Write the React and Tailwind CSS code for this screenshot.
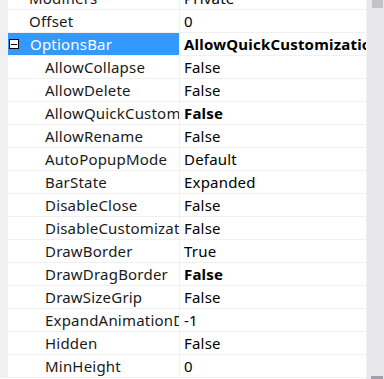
const rows = [
  { name: 'Modifiers', value: 'Private', level: 0 },
  { name: 'Offset', value: '0', level: 0 },
  { name: 'OptionsBar', value: 'AllowQuickCustomization', level: 0, group: true, bold: true },
  { name: 'AllowCollapse', value: 'False', level: 1 },
  { name: 'AllowDelete', value: 'False', level: 1 },
  { name: 'AllowQuickCustomization', value: 'False', level: 1, bold: true },
  { name: 'AllowRename', value: 'False', level: 1 },
  { name: 'AutoPopupMode', value: 'Default', level: 1 },
  { name: 'BarState', value: 'Expanded', level: 1 },
  { name: 'DisableClose', value: 'False', level: 1 },
  { name: 'DisableCustomization', value: 'False', level: 1 },
  { name: 'DrawBorder', value: 'True', level: 1 },
  { name: 'DrawDragBorder', value: 'False', level: 1, bold: true },
  { name: 'DrawSizeGrip', value: 'False', level: 1 },
  { name: 'ExpandAnimationDelay', value: '-1', level: 1 },
  { name: 'Hidden', value: 'False', level: 1 },
  { name: 'MinHeight', value: '0', level: 1 },
];

function Row({ row }) {
  const selected = row.group;
  return (
    <div className="flex h-[23px] border-b border-[#f0f0f0]">
      <div className="w-[8px] shrink-0 bg-[#f0f0f0]" />
      <div
        className={`flex w-[172px] shrink-0 items-center overflow-hidden whitespace-nowrap border-r border-[#f0f0f0] ${
          selected ? 'bg-[#3399ff] text-white' : 'text-[#1a1a1a]'
        }`}
      >
        {row.group ? (
          <>
            <span className="ml-[1px] flex h-[10px] w-[10px] shrink-0 items-center justify-center border border-black bg-white">
              <span className="h-[1px] w-[6px] bg-black" />
            </span>
            <span className="pl-[11px]">{row.name}</span>
          </>
        ) : (
          <span className={row.level ? 'pl-[37px]' : 'pl-[21px]'}>{row.name}</span>
        )}
      </div>
      <div
        className={`flex min-w-0 flex-1 items-center overflow-hidden whitespace-nowrap pl-[4px] text-black ${
          row.bold ? 'font-bold' : ''
        }`}
      >
        {row.value}
      </div>
    </div>
  );
}

export default function App() {
  return (
    <div
      className="flex h-[379px] w-[384px] overflow-hidden bg-white text-[15px] leading-none tracking-[0.2px]"
      style={{ fontFamily: '"Noto Sans", "Noto Sans CJK SC", sans-serif' }}
    >
      <div className="h-full w-[367px] shrink-0 overflow-hidden border-r border-[#f0f0f0]">
        <div className="-mt-[13px]">
          {rows.map((r) => (
            <Row key={r.name} row={r} />
          ))}
        </div>
      </div>
      <div className="relative flex-1 bg-[#e8e8ec]">
        <div className="absolute left-[5px] top-0 h-[8px] w-[11px] bg-[#c2c3c9]" />
        <div className="absolute bottom-0 left-[4px] h-[3px] w-[12px] bg-[#a0a0a8]" />
      </div>
    </div>
  );
}
